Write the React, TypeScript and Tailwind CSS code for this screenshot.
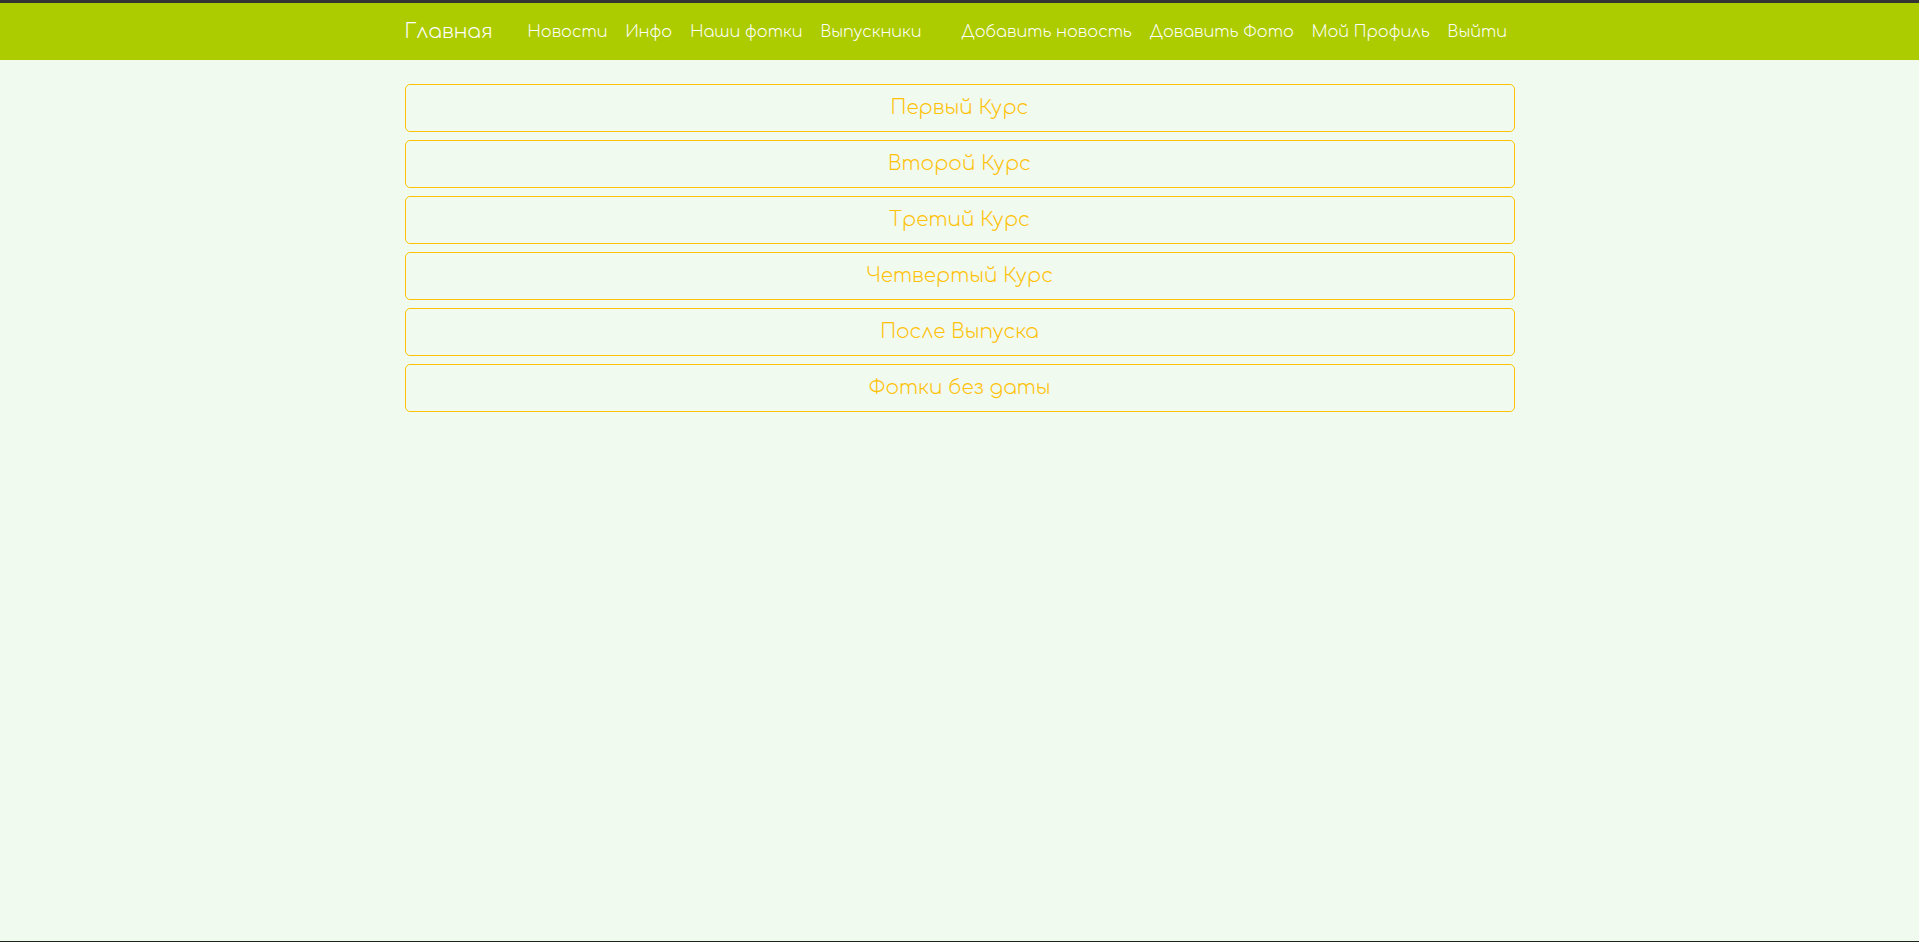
const leftLinks = ['Новости', 'Инфо', 'Наши фотки', 'Выпускники'];
const rightLinks = ['Добавить новость', 'Довавить Фото', 'Мой Профиль', 'Выйти'];

const courses = [
    'Первый Курс',
    'Второй Курс',
    'Третий Курс',
    'Четвертый Курс',
    'После Выпуска',
    'Фотки без даты',
];

const App = () => {
    return (
        <div className="h-[942px] flex flex-col bg-[#f0faee] font-['Comfortaa','DejaVu_Sans',sans-serif] font-light border-t-[3px] border-[#333333] border-b border-b-[#1c261c]">
            {/* Navbar */}
            <nav className="bg-[#adcc00] pt-[9px] pb-2 flex-shrink-0">
                <div className="w-[1140px] mx-auto px-[15px] flex items-center">
                    <a href="#" className="text-white text-[20px] leading-[30px] py-[5px] mr-[26px] whitespace-nowrap">
                        Главная
                    </a>
                    <ul className="flex items-center">
                        {leftLinks.map(link => (
                            <li key={link}>
                                <a href="#" className="block px-[9px] py-2 text-white text-[16px] leading-6 whitespace-nowrap">
                                    {link}
                                </a>
                            </li>
                        ))}
                    </ul>
                    <ul className="flex items-center ml-[22px]">
                        {rightLinks.map(link => (
                            <li key={link}>
                                <a href="#" className="block px-[9px] py-2 text-white text-[16px] leading-6 whitespace-nowrap">
                                    {link}
                                </a>
                            </li>
                        ))}
                    </ul>
                </div>
            </nav>

            {/* Courses */}
            <div className="w-[1140px] mx-auto px-[15px] mt-6 flex flex-col gap-2">
                {courses.map(course => (
                    <button
                        key={course}
                        className="w-full border border-[#ffc107] text-[#ffc107] rounded-[5px] px-4 py-2 text-[20px] leading-[30px] text-center hover:bg-[#ffc107] hover:text-[#212529]"
                    >
                        {course}
                    </button>
                ))}
            </div>
        </div>
    );
};

export default App;
